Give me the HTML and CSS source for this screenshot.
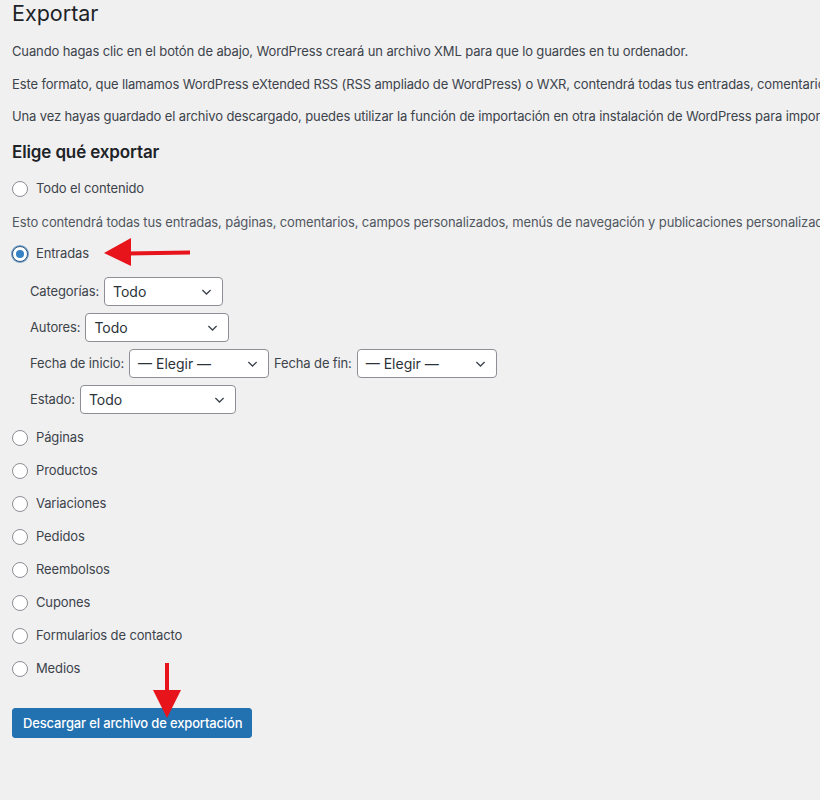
FILE: index.html
```html
<!DOCTYPE html>
<html lang="es">
<head>
    <meta charset="utf-8">
    <title>Exportar</title>
    <link rel="stylesheet" href="styles.css">
</head>
<body>
    <div class="wrap">
        <h1>Exportar</h1>
        <p>Cuando hagas clic en el botón de abajo, WordPress creará un archivo XML para que lo guardes en tu ordenador.</p>
        <p>Este formato, que llamamos WordPress eXtended RSS (RSS ampliado de WordPress) o WXR, contendrá todas tus entradas, comentarios, campos personalizados, categorías y etiquetas.</p>
        <p>Una vez hayas guardado el archivo descargado, puedes utilizar la función de importación en otra instalación de WordPress para importar el contenido de este sitio.</p>

        <h2>Elige qué exportar</h2>

        <div class="choices">
            <label class="radio-row"><span class="radio"></span>Todo el contenido</label>
            <p class="description">Esto contendrá todas tus entradas, páginas, comentarios, campos personalizados, menús de navegación y publicaciones personalizadas.</p>

            <label class="radio-row"><span class="radio checked"></span>Entradas</label>
            <ul class="filters">
                <li>
                    <span class="filter-label">Categorías:</span>
                    <span class="select w-cat"><span>Todo</span><svg viewBox="0 0 12 8"><path d="M1.5 1.8 6 6.2l4.5-4.4"/></svg></span>
                </li>
                <li>
                    <span class="filter-label">Autores:</span>
                    <span class="select w-author"><span>Todo</span><svg viewBox="0 0 12 8"><path d="M1.5 1.8 6 6.2l4.5-4.4"/></svg></span>
                </li>
                <li>
                    <span class="filter-label">Fecha de inicio:</span>
                    <span class="select w-date"><span>— Elegir —</span><svg viewBox="0 0 12 8"><path d="M1.5 1.8 6 6.2l4.5-4.4"/></svg></span>
                    <span class="filter-label">Fecha de fin:</span>
                    <span class="select w-date"><span>— Elegir —</span><svg viewBox="0 0 12 8"><path d="M1.5 1.8 6 6.2l4.5-4.4"/></svg></span>
                </li>
                <li>
                    <span class="filter-label">Estado:</span>
                    <span class="select w-status"><span>Todo</span><svg viewBox="0 0 12 8"><path d="M1.5 1.8 6 6.2l4.5-4.4"/></svg></span>
                </li>
            </ul>

            <label class="radio-row"><span class="radio"></span>Páginas</label>
            <label class="radio-row"><span class="radio"></span>Productos</label>
            <label class="radio-row"><span class="radio"></span>Variaciones</label>
            <label class="radio-row"><span class="radio"></span>Pedidos</label>
            <label class="radio-row"><span class="radio"></span>Reembolsos</label>
            <label class="radio-row"><span class="radio"></span>Cupones</label>
            <label class="radio-row"><span class="radio"></span>Formularios de contacto</label>
            <label class="radio-row"><span class="radio"></span>Medios</label>
        </div>

        <button class="button-primary">Descargar el archivo de exportación</button>
    </div>

    <!-- annotation arrows drawn over the page -->
    <svg class="annotations" width="820" height="800" viewBox="0 0 820 800">
        <path class="arrow-line" d="M126 253.5 L190 252.5"/>
        <path class="arrow-head" d="M104 253 L131 238 L131 266 Z"/>
        <path class="arrow-line" d="M167 663 L167 692"/>
        <path class="arrow-head" d="M153 690 L181 690 L167 718 Z"/>
    </svg>
</body>
</html>
```

FILE: styles.css
```css
body {
    margin: 0;
    background-color: #f0f0f1;
    color: #3c434a;
    font-family: Inter, "Noto Sans", sans-serif;
    font-size: 13px;
    line-height: 1.5;
    letter-spacing: -0.13px;
    overflow: hidden;
}
.wrap {
    padding: 0 12px;
    white-space: nowrap;
}
h1 {
    margin: 0;
    padding-bottom: 3px;
    font-size: 21.5px;
    font-weight: 400;
    line-height: 26px;
    letter-spacing: 0;
    color: #1d2327;
}
p {
    margin: 13px 0;
}
h2 {
    margin: 14px 0 0;
    font-size: 17px;
    font-weight: 600;
    line-height: 1.3;
    color: #1d2327;
}

/* Radio list */
.choices {
    display: flex;
    flex-direction: column;
    margin-top: 16px;
}
.radio-row {
    display: flex;
    align-items: center;
    gap: 8px;
    height: 20px;
    margin-bottom: 13px;
}
.radio {
    width: 16px;
    height: 16px;
    border: 1px solid #8c8f94;
    border-radius: 50%;
    background-color: #fff;
    box-sizing: border-box;
    display: flex;
    align-items: center;
    justify-content: center;
    flex-shrink: 0;
}
.radio.checked {
    border-color: #2c5a85;
    box-shadow: 0 0 0 1px #7aa1c6;
}
.radio.checked::before {
    content: '';
    width: 8px;
    height: 8px;
    border-radius: 50%;
    background-color: #3582c4;
}
.description {
    margin: 0 0 12px;
    height: 20px;
    line-height: 20px;
    color: #50575e;
}

/* Entradas filters */
.filters {
    list-style: none;
    margin: 0 0 13px 18px;
    padding: 0;
    display: flex;
    flex-direction: column;
    gap: 6px;
}
.filters li {
    display: flex;
    align-items: center;
    gap: 5px;
    height: 30px;
}
.select {
    display: flex;
    align-items: center;
    justify-content: space-between;
    height: 29px;
    padding: 0 10px 0 8px;
    border: 1px solid #8c8f94;
    border-radius: 4px;
    background-color: #fff;
    box-sizing: border-box;
    font-size: 14px;
    letter-spacing: 0;
    color: #2c3338;
}
.select svg {
    width: 11px;
    height: 8px;
    fill: none;
    stroke: #3c434a;
    stroke-width: 1.4;
}
.w-cat { width: 119px; }
.w-author { width: 144px; }
.w-date { width: 140px; }
.w-status { width: 156px; }

/* Submit */
.button-primary {
    margin-top: 16px;
    width: 240px;
    height: 30px;
    padding: 0 10px;
    border: 1px solid #2271b1;
    border-radius: 3px;
    background-color: #2271b1;
    color: #fff;
    font-family: inherit;
    font-size: 13px;
    font-weight: 500;
    letter-spacing: -0.15px;
}

.annotations {
    position: absolute;
    top: 0;
    left: 0;
    pointer-events: none;
}
.arrow-line {
    stroke: #e8141b;
    stroke-width: 4;
    fill: none;
}
.arrow-head {
    fill: #e8141b;
}
```
